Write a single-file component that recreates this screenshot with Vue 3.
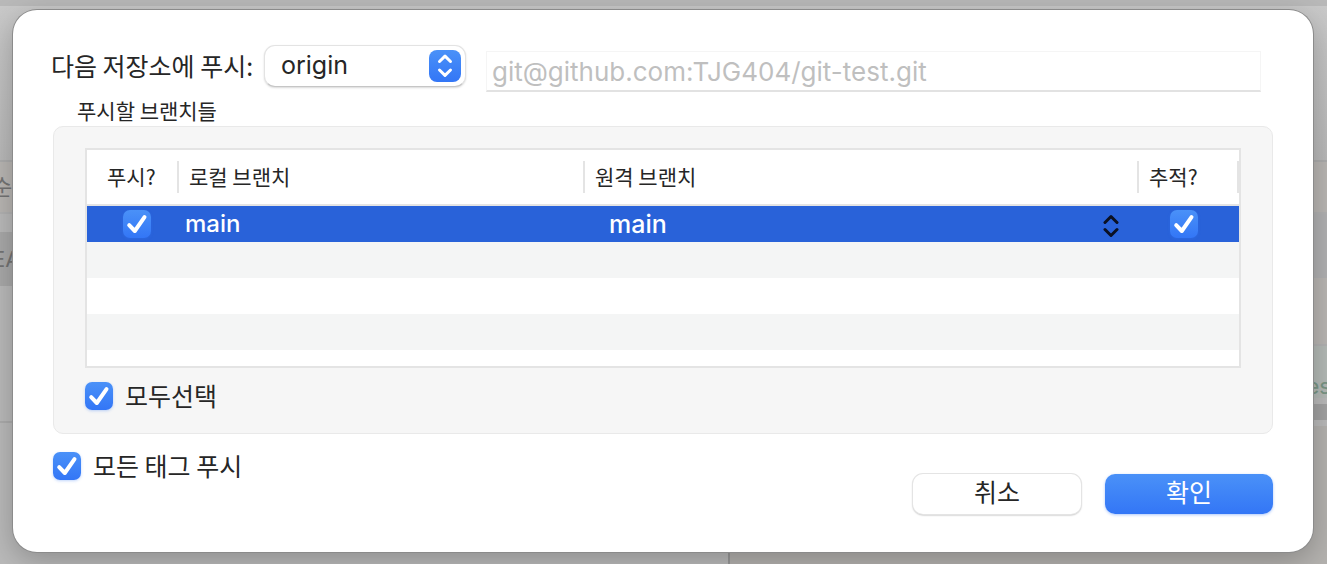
<script setup>
import { ref } from 'vue'

const remote = ref('origin')
const url = ref('git@github.com:TJG404/git-test.git')
const branches = ref([{ local: 'main', target: 'main', push: true, track: true }])
const selectAll = ref(true)
const pushTags = ref(true)
</script>

<template>
  <div class="page">
    <div class="backdrop" aria-hidden="true">
      <div class="strip"></div>
      <div class="panes">
        <div class="pane left">
          <div class="toolbar"></div>
          <div class="band warm"><span class="sort">순</span></div>
          <div class="gap"></div>
          <div class="band picked"><span class="head">EA</span></div>
          <div class="blank"></div>
          <div class="rest"></div>
        </div>
        <div class="pane right">
          <div class="toolbar"></div>
          <div class="band warm"></div>
          <div class="band cool"></div>
          <div class="band warm tall"></div>
          <div class="band green"><span class="tag">es</span></div>
          <div class="band bar"></div>
          <div class="rest"></div>
        </div>
      </div>
    </div>

    <form class="dialog" role="dialog" @submit.prevent>
      <div class="repo">
        <label for="remote">다음 저장소에 푸시:</label>
        <div class="popup">
          <select id="remote" v-model="remote">
            <option>origin</option>
          </select>
          <span class="knob">
            <svg viewBox="0 0 32 32"><path d="M10.500 11.500 16 6.200l5.500 5.300M10.500 20 16 25.300l5.500-5.300" /></svg>
          </span>
        </div>
        <input v-model="url" class="url" type="text" aria-label="저장소 URL" disabled />
      </div>

      <h2 id="branches-title">푸시할 브랜치들</h2>
      <section class="group" aria-labelledby="branches-title">
        <div class="list">
          <table>
            <colgroup>
              <col class="c-push" />
              <col class="c-local" />
              <col />
              <col class="c-track" />
            </colgroup>
            <thead>
              <tr>
                <th class="first"><div>푸시?</div></th>
                <th><div>로컬 브랜치</div></th>
                <th><div>원격 브랜치</div></th>
                <th><div>추적?</div></th>
              </tr>
            </thead>
            <tbody>
              <tr v-for="b in branches" :key="b.local">
                <td>
                  <span class="check mid">
                    <input v-model="b.push" type="checkbox" aria-label="푸시" />
                    <svg viewBox="0 0 28 28"><path d="M6.200 15.200 11.800 21 21.500 7.200" /></svg>
                  </span>
                </td>
                <td class="name">{{ b.local }}</td>
                <td>
                  <div class="target">
                    <select v-model="b.target" aria-label="원격 브랜치">
                      <option>main</option>
                    </select>
                    <svg viewBox="0 0 16 24"><path d="M2 8.500 8 2.500l6 6M2 15.500l6 6 6-6" /></svg>
                  </div>
                </td>
                <td>
                  <span class="check near">
                    <input v-model="b.track" type="checkbox" aria-label="추적" />
                    <svg viewBox="0 0 28 28"><path d="M6.200 15.200 11.800 21 21.500 7.200" /></svg>
                  </span>
                </td>
              </tr>
            </tbody>
          </table>
          <div class="stripes"></div>
        </div>
        <label class="option">
          <span class="check">
            <input v-model="selectAll" type="checkbox" />
            <svg viewBox="0 0 28 28"><path d="M6.200 15.200 11.800 21 21.500 7.200" /></svg>
          </span>
          <span class="caption">모두선택</span>
        </label>
      </section>

      <div class="footer">
        <label class="option">
          <span class="check">
            <input v-model="pushTags" type="checkbox" />
            <svg viewBox="0 0 28 28"><path d="M6.200 15.200 11.800 21 21.500 7.200" /></svg>
          </span>
          <span class="caption">모든 태그 푸시</span>
        </label>
        <div class="actions">
          <button type="button">취소</button>
          <button type="submit" class="primary">확인</button>
        </div>
      </div>
    </form>
  </div>
</template>

<style>
body {
  background: #a8a8a8;
}
</style>

<style scoped>
* {
  box-sizing: border-box;
}
.page {
  position: relative;
  min-height: 100vh;
  padding: 10px 14px 12px 13px;
  overflow: hidden;
  font-family: 'Noto Sans CJK KR', sans-serif;
  color: #262626;
}
select,
.url,
.name {
  font-family: Inter, 'Noto Sans CJK KR', sans-serif;
}

/* dimmed window behind the sheet */
.backdrop {
  position: absolute;
  inset: 0;
  display: flex;
  flex-direction: column;
  background: #bababa;
}
.strip {
  height: 6px;
  background: #b9b9b9;
}
.panes {
  flex: 1;
  display: flex;
}
.pane {
  display: flex;
  flex-direction: column;
}
.left {
  flex: 55 1 0;
}
.right {
  flex: 45 1 0;
}
.toolbar {
  height: 156px;
  border-bottom: 2px solid #adadad;
  background: linear-gradient(#c9c9c9, #b9b9b9);
}
.band {
  display: flex;
  align-items: center;
  height: 52px;
  color: #747474;
  white-space: nowrap;
}
.warm {
  background: #b9b6b3;
  border-bottom: 2px solid #b2b2b2;
}
.gap {
  height: 18px;
}
.picked {
  height: 54px;
  background: #a9a9a9;
}
.sort {
  padding-bottom: 4px;
  margin-left: -8px;
  font-size: 22px;
}
.head {
  margin-left: -8px;
  font-family: Inter, sans-serif;
  font-size: 22px;
}
.blank {
  height: 135px;
}
.rest {
  flex: 1;
  border-top: 2px solid #acacac;
}
.left .rest {
  border-right: 2px solid #989898;
}
.cool {
  height: 64px;
  background: #b1b1b2;
}
.tall {
  height: 68px;
}
.green {
  height: 52px;
  align-items: flex-end;
  justify-content: flex-end;
  background: #b4bab6;
  color: #7b9786;
}
.tag {
  margin-right: -4px;
  font-family: Inter, sans-serif;
  font-size: 22px;
  line-height: 24px;
}
.bar {
  height: 16px;
  margin: 6px 0;
  background: #a2a2a2;
}
.right .rest {
  background: #b4b2af;
  border: 0;
}

.dialog {
  position: relative;
  min-height: calc(100vh - 22px);
  padding: 35px 40px 37px;
  border-radius: 24px;
  background: #fff;
  box-shadow: 0 0 0 1px #8b8b8b, 0 8px 30px rgba(0, 0, 0, 0.25);
}
.repo {
  display: flex;
  height: 50px;
  padding-right: 12px;
}
.repo label {
  width: 211px;
  margin-left: -2px;
  font-size: 25px;
  line-height: 40px;
  white-space: nowrap;
}
.popup {
  display: flex;
  position: relative;
  flex: none;
  width: 202px;
  height: 42px;
  margin: 0 20px 0 2px;
}
.popup select {
  width: 100%;
  height: 42px;
  padding: 0 40px 2px 16px;
  border: 1px solid #e3e3e3;
  border-bottom-color: #c6c6c6;
  border-radius: 11px;
  appearance: none;
  background: #fff;
  box-shadow: 0 1px 2px rgba(0, 0, 0, 0.15);
  color: #262626;
  font-size: 25px;
}
.knob {
  position: absolute;
  top: 5px;
  right: 5px;
  width: 32px;
  height: 32px;
  border-radius: 8px;
  background: linear-gradient(#4a91f8, #3376f6);
  pointer-events: none;
}
svg {
  display: block;
  fill: none;
  stroke: #fff;
  stroke-width: 3;
  stroke-linecap: round;
  stroke-linejoin: round;
  pointer-events: none;
}
.url {
  flex: 1;
  min-width: 0;
  height: 41px;
  margin-top: 6px;
  padding: 0 5px;
  border: 1px solid #f5f5f5;
  border-bottom: 2px solid #e2e2e2;
  background: #fff;
  color: #bfbfbf;
  font-size: 26px;
}
h2 {
  margin: 0;
  padding-left: 24px;
  font-size: 21px;
  font-weight: 400;
  line-height: 31px;
}
.group {
  padding: 21px 31px 23px;
  border: 1px solid #e9e9e9;
  border-radius: 10px;
  background: #f6f6f6;
}
.list {
  border: 2px solid #e4e4e4;
  background: #fff;
}
table {
  width: 100%;
  border-collapse: separate;
  border-spacing: 0;
  table-layout: fixed;
}
.c-push {
  width: 92px;
}
.c-local {
  width: 406px;
}
.c-track {
  width: 100px;
}
th {
  height: 56px;
  padding: 0;
  border-bottom: 2px solid #e4e4e4;
  font-size: 21px;
  font-weight: 400;
  text-align: left;
}
th div {
  height: 32px;
  padding-left: 10px;
  border-right: 2px solid #e4e4e4;
  line-height: 30px;
}
th.first div {
  padding-left: 20px;
}
tbody tr {
  background: #2962d9;
  color: #fff;
}
td {
  height: 36px;
  padding: 0;
}
td.name {
  padding-left: 6px;
  font-size: 24px;
  font-weight: 500;
  line-height: 36px;
}
.target {
  display: flex;
  position: relative;
}
.target select {
  width: 100%;
  height: 36px;
  padding: 0 40px 0 24px;
  border: 0;
  appearance: none;
  background: transparent;
  color: #fff;
  font-size: 25px;
  font-weight: 500;
}
.target svg {
  position: absolute;
  top: 8px;
  right: 20px;
  width: 16px;
  height: 24px;
  stroke: #0b1022;
}
.stripes {
  height: 124px;
  background: repeating-linear-gradient(#f4f5f5 0 36px, #fff 36px 72px);
}
.check {
  display: grid;
  flex: none;
  width: 28px;
  height: 28px;
}
.check > * {
  grid-area: 1 / 1;
  width: 28px;
  height: 28px;
  margin: 0;
}
.check input {
  appearance: none;
  border-radius: 7px;
  background: #fff;
  box-shadow: 0 1px 3px rgba(51, 118, 246, 0.3);
}
.check input:checked {
  background: linear-gradient(#4a91f8, #3376f6);
}
.check svg {
  z-index: 1;
  stroke-width: 4;
}
.mid {
  margin-left: 36px;
}
.near {
  margin-left: 31px;
}
.option {
  display: flex;
  gap: 12px;
  height: 28px;
  font-size: 25px;
  white-space: nowrap;
}
.caption {
  line-height: 26px;
}
.group .option {
  margin-top: 14px;
}
.footer {
  display: flex;
  justify-content: space-between;
  padding-top: 18px;
}
.actions {
  display: flex;
  gap: 24px;
  padding-top: 22px;
}
button {
  width: 168px;
  height: 40px;
  padding: 0 0 6px;
  border: 0;
  border-radius: 10px;
  background: #fff;
  box-shadow: 0 0 0 1px #e4e4e4, 0 1px 2px rgba(0, 0, 0, 0.45);
  color: #262626;
  font-family: inherit;
  font-size: 25px;
  line-height: 34px;
}
.primary {
  background: linear-gradient(#4a91f8, #3376f6);
  box-shadow: 0 1px 3px rgba(51, 118, 246, 0.4);
  color: #fff;
}
</style>
